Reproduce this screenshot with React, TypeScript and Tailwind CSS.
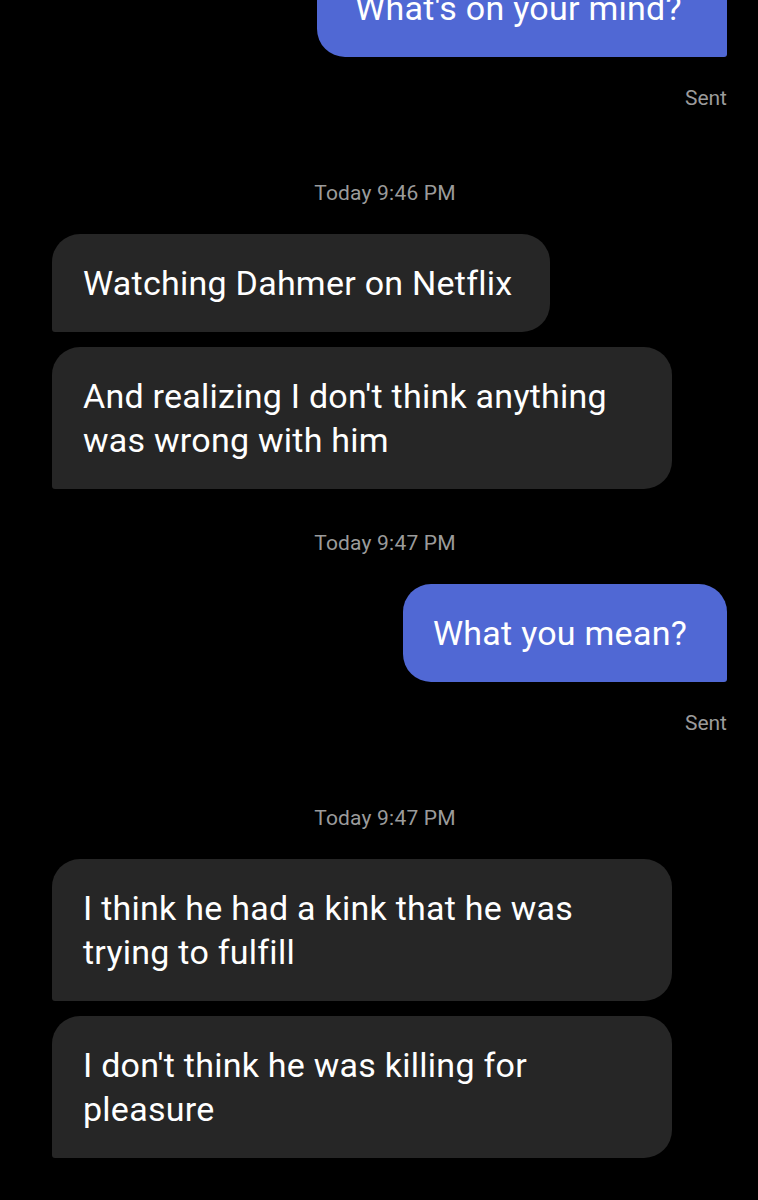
import React from "react";

type Item =
  | { kind: "out"; text: string; first?: boolean }
  | { kind: "in"; text: string }
  | { kind: "sent" }
  | { kind: "time"; text: string; afterSent?: boolean };

const items: Item[] = [
  { kind: "out", text: "What's on your mind?", first: true },
  { kind: "sent" },
  { kind: "time", text: "Today 9:46 PM", afterSent: true },
  { kind: "in", text: "Watching Dahmer on Netflix" },
  { kind: "in", text: "And realizing I don't think anything was wrong with him" },
  { kind: "time", text: "Today 9:47 PM" },
  { kind: "out", text: "What you mean?" },
  { kind: "sent" },
  { kind: "time", text: "Today 9:47 PM", afterSent: true },
  { kind: "in", text: "I think he had a kink that he was trying to fulfill" },
  { kind: "in", text: "I don't think he was killing for pleasure" },
];

export default function App() {
  return (
    <div
      className="w-[758px] h-[1200px] bg-black overflow-hidden"
      style={{ fontFamily: "Roboto, 'Noto Sans', sans-serif" }}
    >
      <div className="flex flex-col">
        {items.map((it, i) => {
          if (it.kind === "out")
            return (
              <div
                key={i}
                className={`flex justify-end pr-[31px] ${it.first ? "-mt-[41px]" : "mt-[27px]"}`}
              >
                <div
                  className={`bg-[#5068d4] rounded-[28px] rounded-br-[3px] py-[27px] text-[34px] leading-[44px] tracking-[0.25px] text-white ${
                    it.first ? "w-[410px] pl-[38px]" : "max-w-[620px] pl-[30px] pr-[40px]"
                  }`}
                >
                  {it.text}
                </div>
              </div>
            );
          if (it.kind === "in") {
            const prevIn = i > 0 && items[i - 1].kind === "in";
            return (
              <div key={i} className={`flex justify-start pl-[52px] ${prevIn ? "mt-[15px]" : "mt-[27px]"}`}>
                <div className="max-w-[620px] bg-[#262626] rounded-[28px] rounded-bl-[3px] pl-[31px] pr-[38px] py-[27px] text-[34px] leading-[44px] tracking-[0.25px] text-white">
                  {it.text}
                </div>
              </div>
            );
          }
          if (it.kind === "sent")
            return (
              <div key={i} className="mt-[27px] pr-[31px] text-right text-[21px] leading-[28px] text-[#9b9b9b]">
                Sent
              </div>
            );
          return (
            <div
              key={i}
              className={`${it.afterSent ? "mt-[67px]" : "mt-[40px]"} pl-[12px] text-center text-[21px] leading-[28px] tracking-[0.2px] text-[#9b9b9b]`}
            >
              {it.text}
            </div>
          );
        })}
      </div>
    </div>
  );
}
